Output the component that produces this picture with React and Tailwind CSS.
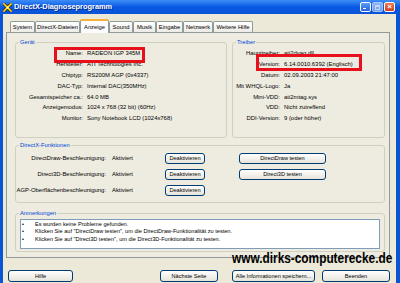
import React from 'react';

const tabs = [
  { name: 'System', w: 'w-[25px]' },
  { name: 'DirectX-Dateien', w: 'w-[45px]' },
  { name: 'Anzeige', w: 'w-[29px]', active: true },
  { name: 'Sound', w: 'w-[24px]' },
  { name: 'Musik', w: 'w-[23px]' },
  { name: 'Eingabe', w: 'w-[27px]' },
  { name: 'Netzwerk', w: 'w-[30px]' },
  { name: 'Weitere Hilfe', w: 'w-[40px]' },
];

const geraet = [
  ['Name:', 'RADEON IGP 345M'],
  ['Hersteller:', 'ATI Technologies Inc.'],
  ['Chiptyp:', 'RS200M AGP (0x4337)'],
  ['DAC-Typ:', 'Internal DAC(350MHz)'],
  ['Gesamtspeicher ca.:', '64.0 MB'],
  ['Anzeigemodus:', '1024 x 768 (32 bit) (60Hz)'],
  ['Monitor:', 'Sony Notebook LCD (1024x768)'],
];

const treiber = [
  ['Haupttreiber:', 'ati2dvag.dll'],
  ['Version:', '6.14.0010.6392 (Englisch)'],
  ['Datum:', '02.09.2003 21:47:00'],
  ['Mit WHQL-Logo:', 'Ja'],
  ['Mini-VDD:', 'ati2mtag.sys'],
  ['VDD:', 'Nicht zutreffend'],
  ['DDI-Version:', '9 (oder höher)'],
];

const funktionen = [
  ['DirectDraw-Beschleunigung:', 'DirectDraw testen'],
  ['Direct3D-Beschleunigung:', 'Direct3D testen'],
  ['AGP-Oberflächenbeschleunigung:', null],
];

const notes = [
  'Es wurden keine Probleme gefunden.',
  'Klicken Sie auf "DirectDraw testen", um die DirectDraw-Funktionalität zu testen.',
  'Klicken Sie auf "Direct3D testen", um die Direct3D-Funktionalität zu testen.',
];

const Btn = ({ className = '', children }) => (
  <div
    className={`flex items-center justify-center whitespace-nowrap rounded-[3px] border border-[#003C74] bg-gradient-to-b from-white to-[#E6E4DA] text-[5.6px] text-black ${className}`}
  >
    {children}
  </div>
);

const Group = ({ title, className = '', children }) => (
  <fieldset className={`rounded-[3px] border border-[#D0D0BF] ${className}`}>
    <legend className="ml-[3px] px-[1px] text-[5.8px] leading-[7px] text-[#0046D5]">{title}</legend>
    {children}
  </fieldset>
);

const DxIcon = () => (
  <svg width="9" height="9" viewBox="0 0 10 10">
    <path d="M1 1 L9 9 M9 1 L1 9" stroke="#3a2a00" strokeWidth="3.4" strokeLinecap="round" />
    <path d="M1 1 L9 9 M9 1 L1 9" stroke="#FFD21F" strokeWidth="1.8" strokeLinecap="round" />
    <circle cx="5" cy="5" r="1.3" fill="#fff6b0" />
  </svg>
);

export default function App() {
  return (
    <div className="relative flex h-[283px] w-[400px] flex-col overflow-hidden font-['Liberation_Sans',sans-serif] text-black">
      {/* title bar */}
      <div className="flex h-[14px] shrink-0 items-center bg-gradient-to-b from-[#3D8DF7] via-[#0758E3] to-[#0A54D6] pl-[3px] pr-[5px]">
        <DxIcon />
        <span className="ml-[2px] text-[7.4px] font-bold leading-none text-white [text-shadow:1px_1px_0_#0a2a8a]">
          DirectX-Diagnoseprogramm
        </span>
        <div className="ml-auto flex gap-[1px]">
          <div className="relative h-[10px] w-[11px] rounded-[2px] border border-white bg-gradient-to-b from-[#5D9BF8] to-[#2762E0]">
            <div className="absolute bottom-[2px] left-[2px] h-[1.5px] w-[3px] bg-white" />
          </div>
          <div className="flex h-[10px] w-[11px] items-center justify-center rounded-[2px] border border-[#A9C6F5] bg-gradient-to-b from-[#8DB6F7] to-[#6E9CEC]">
            <div className="h-[5px] w-[5px] border border-t-2 border-[#C3D7FA]" />
          </div>
          <div className="flex h-[10px] w-[11px] items-center justify-center rounded-[2px] border border-white bg-gradient-to-b from-[#EE7A52] to-[#C9421C] text-[8px] font-bold leading-none text-white">
            ×
          </div>
        </div>
      </div>

      {/* window body */}
      <div className="flex flex-1 flex-col border-l-[3px] border-r-[4px] border-[#0A54D6] bg-[#ECE9D8]">
        {/* tabs */}
        <div className="ml-[7px] flex h-[18px] items-end pt-[5px]">
          {tabs.map((t) =>
            t.active ? (
              <div
                key={t.name}
                className={`${t.w} relative z-10 -mb-px flex h-[14px] items-center justify-center rounded-t-[2px] border-x border-[#919B9C] border-t-2 border-t-[#F5B13A] bg-[#FCFCFE] text-[5.8px]`}
              >
                {t.name}
              </div>
            ) : (
              <div
                key={t.name}
                className={`${t.w} flex h-[11px] items-center justify-center rounded-t-[2px] border border-b-0 border-[#919B9C] bg-gradient-to-b from-white to-[#ECEBE6] text-[5.8px]`}
              >
                {t.name}
              </div>
            )
          )}
        </div>

        {/* tab panel */}
        <div className="ml-[3px] flex w-[384px] flex-col gap-[4px] border border-[#919B9C] bg-[#EEECE1] pb-[5px] pl-[8px] pt-[6px] text-[5.9px]">
          <div className="flex gap-[5px]">
            <Group title="Gerät" className="h-[99px] w-[212px] pt-[2.5px]">
              {geraet.map(([l, v]) => (
                <div key={l} className="flex h-[10.8px] items-center">
                  <span className="w-[67px] shrink-0 text-right">{l}</span>
                  <span className="ml-[4px] whitespace-nowrap">{v}</span>
                </div>
              ))}
            </Group>
            <Group title="Treiber" className="h-[99px] w-[153px] pt-[2.5px]">
              {treiber.map(([l, v]) => (
                <div key={l} className="flex h-[10.8px] items-center">
                  <span className="w-[47px] shrink-0 whitespace-nowrap text-right">{l}</span>
                  <span className="ml-[4px] whitespace-nowrap">{v}</span>
                </div>
              ))}
            </Group>
          </div>

          <Group title="DirectX-Funktionen" className="h-[61px] w-[370px] pt-[1.5px]">
            {funktionen.map(([l, test]) => (
              <div key={l} className="flex h-4 items-center">
                <span className="w-[90px] shrink-0 whitespace-nowrap text-right">{l}</span>
                <span className="ml-[6px] w-[53px] shrink-0">Aktiviert</span>
                <Btn className="h-[11px] w-[40px]">Deaktivieren</Btn>
                {test && <Btn className="ml-[34px] h-[11px] w-[87px]">{test}</Btn>}
              </div>
            ))}
          </Group>

          <Group title="Anmerkungen" className="mt-[3px] h-[42px] w-[370px] pt-[1.5px]">
            <div className="mx-[4px] h-[30px] border border-[#7F9DB9] bg-white pt-[1px] text-[5.6px] leading-[7.5px]">
              {notes.map((n) => (
                <div key={n} className="flex whitespace-nowrap">
                  <span className="ml-[1px] w-[13px]">•</span>
                  <span>{n}</span>
                </div>
              ))}
            </div>
          </Group>
        </div>

        {/* bottom buttons */}
        <div className="mt-[12px] flex">
          <Btn className="ml-[5px] h-[12px] w-[65px]">Hilfe</Btn>
          <Btn className="ml-[87px] h-[12px] w-[58px]">Nächste Seite</Btn>
          <Btn className="ml-[14px] h-[12px] w-[83px]">Alle Informationen speichern...</Btn>
          <Btn className="ml-[7px] h-[12px] w-[68px]">Beenden</Btn>
        </div>
      </div>

      {/* red annotation boxes */}
      <div className="absolute left-[54px] top-[47px] h-[16px] w-[91px] border-[3.5px] border-[#E8101A]" />
      <div className="absolute left-[256px] top-[54px] h-[17px] w-[106px] border-[3.5px] border-[#E8101A]" />

      {/* watermark */}
      <div className="absolute left-[232px] top-[250px] origin-left scale-x-[0.79] whitespace-nowrap text-[15px] font-bold leading-[15px] text-black">
        www.dirks-computerecke.de
      </div>
    </div>
  );
}
